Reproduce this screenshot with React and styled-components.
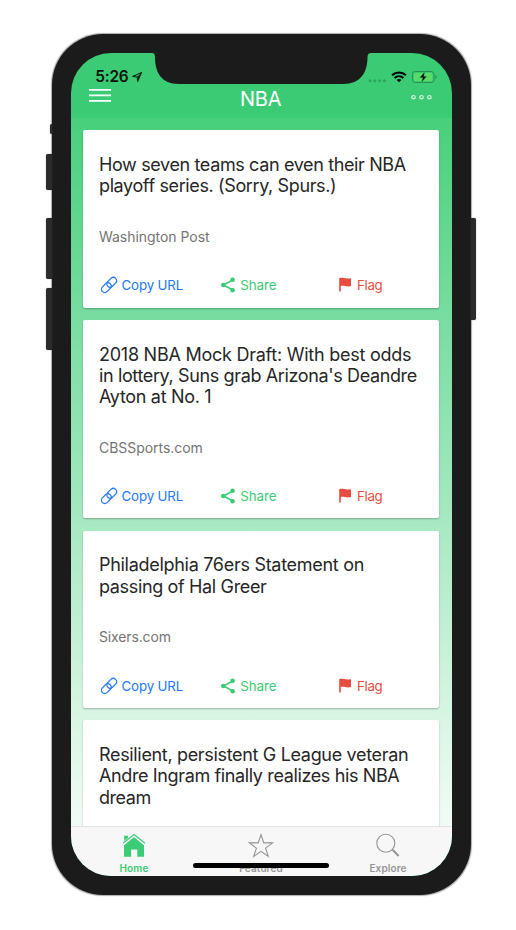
import React from 'react';
import styled, { createGlobalStyle } from 'styled-components';

const GREEN = '#3acb74';

const Global = createGlobalStyle`
  *, *::before, *::after { box-sizing: border-box; }
  body { margin: 0; background: #fff; font-family: Inter, 'Liberation Sans', sans-serif; }
  svg { display: block; flex: none; overflow: visible; }
`;

const Stage = styled.main`
  width: 516px;
  height: 930px;
  padding: 34px 0 0 51.5px;
  overflow: hidden;
`;

const Phone = styled.div`
  position: relative;
  width: 419px;
  height: 861px;
  padding: 19px;
  border-radius: 51px;
  background: #1b1b1b;
  box-shadow: 0 0 1px 0.5px #77777799;
`;

const SideButton = styled.i`
  position: absolute;
  top: ${(p) => p.$top}px;
  ${(p) => (p.$right ? 'right' : 'left')}: ${(p) => -p.$w}px;
  width: ${(p) => p.$w}px;
  height: ${(p) => p.$h}px;
  background: #2b2b2b;
  border-radius: ${(p) => (p.$right ? '0 2px 2px 0' : '2px 0 0 2px')};
  box-shadow: 0 0 1px #555;
`;

const Screen = styled.div`
  position: relative;
  display: flex;
  flex-direction: column;
  width: 381px;
  height: 823px;
  border-radius: 40px;
  overflow: hidden;
  background: ${GREEN};
`;

const Notch = styled.svg`
  position: absolute;
  left: 83.3px;
  top: -1px;
`;

const StatusBar = styled.div`
  display: flex;
  justify-content: space-between;
  height: 31px;
  flex: none;
  padding: 13px 15px 0 24.8px;
`;

const StatusGroup = styled.div`
  display: flex;
  align-items: center;
  height: 21px;
  gap: ${(p) => p.$gap}px;
`;

const Clock = styled.span`
  font-size: 15.4px;
  font-weight: 600;
  line-height: 21px;
  letter-spacing: -0.25px;
  color: #061309;
`;

const NavBar = styled.header`
  display: grid;
  grid-template-columns: 80px 1fr 80px;
  height: 34px;
  flex: none;
  padding: 0 19.4px 0 18.7px;
`;

const NavTitle = styled.h1`
  margin: 3px 0 0;
  text-align: center;
  font-size: 20px;
  font-weight: 400;
  line-height: 24px;
  letter-spacing: -0.2px;
  color: #fff;
`;

const MenuIcon = styled.svg`
  margin-top: 5px;
`;

const MoreIcon = styled.svg`
  justify-self: end;
  margin-top: 10px;
`;

const Feed = styled.section`
  display: flex;
  flex-direction: column;
  gap: 12.3px;
  flex: 1;
  min-height: 0;
  overflow: hidden;
  padding: 12.3px 12.2px 0;
  background: linear-gradient(#48d07c 0%, #7adda2 29%, #a9e9c3 58%, #d4f4e1 82%, #f2fbf6 100%);
`;

const Card = styled.article`
  flex: none;
  min-height: 177.3px;
  padding: 23.7px 16.3px 11.8px;
  background: #fff;
  border-radius: 2px;
  box-shadow: 0 1px 2px rgba(0, 0, 0, 0.28);
`;

const CardTitle = styled.h2`
  margin: 0;
  font-size: 18px;
  font-weight: 400;
  line-height: 21.33px;
  color: #262626;
  white-space: nowrap;
`;

const TitleLine = styled.span`
  display: block;
  letter-spacing: ${(p) => p.$ls}px;
`;

const Source = styled.p`
  margin: 30px 0 28.5px;
  font-size: 14px;
  line-height: 20px;
  letter-spacing: ${(p) => p.$ls}px;
  color: #747474;
`;

const Actions = styled.div`
  display: grid;
  grid-template-columns: 120.3px 117.7px 1fr;
  padding-left: 2px;
  height: 20.6px;
`;

const Action = styled.button`
  display: flex;
  align-items: center;
  gap: ${(p) => p.$gap}px;
  border: 0;
  padding: 0;
  height: 20px;
  background: none;
  font: 400 13.3px/20px Inter, 'Liberation Sans', sans-serif;
  letter-spacing: ${(p) => p.$ls}px;
  color: ${(p) => p.$color};
`;

const TabBar = styled.nav`
  position: relative;
  display: grid;
  grid-template-columns: repeat(3, 1fr);
  height: 50px;
  flex: none;
  background: #f7f7f7;
  border-top: 1px solid #dfe2e0;
`;

const Tab = styled.a`
  display: flex;
  flex-direction: column;
  align-items: center;
  padding-top: 6px;
  gap: 4px;
  font-size: 10px;
  font-weight: 600;
  line-height: 13px;
  letter-spacing: 0.1px;
  color: ${(p) => (p.$active ? GREEN : '#959595')};
`;

const HomeIndicator = styled.div`
  position: absolute;
  left: 122.5px;
  bottom: 8px;
  width: 136px;
  height: 5px;
  border-radius: 3px;
  background: #000;
`;

const LinkIcon = () => (
  <svg width="16" height="16" viewBox="0 0 16 16" fill="none" stroke="currentColor" strokeWidth="1.2">
    <g transform="rotate(-45 8 8)">
      <rect x="-1.3" y="4.7" width="11" height="6.6" rx="3.3" />
      <rect x="6.3" y="4.7" width="11" height="6.6" rx="3.3" />
    </g>
  </svg>
);

const ShareIcon = () => (
  <svg width="14" height="16" viewBox="0 0 14 16" fill="currentColor">
    <path d="M11.8 3 2.4 8l9.4 5" fill="none" stroke="currentColor" strokeWidth="1.5" />
    <circle cx="2.2" cy="8" r="2.2" />
    <circle cx="11.6" cy="2.7" r="2.3" />
    <circle cx="11.6" cy="13.2" r="2.3" />
  </svg>
);

const FlagIcon = () => (
  <svg width="12" height="16" viewBox="0 0 12 16" fill="currentColor">
    <path d="M.2 1.2C3.5-.1 5.4 2.200 12 1.200V9C7 10.300 4.800 7.800 1.800 9V14.600H.2z" />
  </svg>
);

const HomeIcon = () => (
  <svg width="24" height="25" viewBox="0 0 24 25">
    <path d="M2.200 10V2.800H6V7z" fill="currentColor" />
    <path d="M2 11.800 12 3.800l10 8V23.800h-6.700v-7.300H9.100v7.300H2z" fill="currentColor" />
    <path d="M1 10.900 12 2l11 8.900" fill="none" stroke="#f7f7f7" strokeWidth="3.200" />
    <path d="M1 10.200 12 1.600l11 8.600" fill="none" stroke="currentColor" strokeWidth="1.200" />
  </svg>
);

const StarIcon = () => (
  <svg width="26" height="25" viewBox="0 0 26 25" fill="none" stroke="currentColor" strokeWidth="1.1">
    <path d="m13 1.8 2.800 8.100h8.800l-7 5.200 2.700 8.200L13 18.400l-7.300 4.900 2.700-8.200-7-5.200h8.800z" />
  </svg>
);

const SearchIcon = () => (
  <svg width="24" height="25" viewBox="0 0 24 25" fill="none" stroke="currentColor">
    <circle cx="9.8" cy="10.200" r="9" strokeWidth="1.1" />
    <path d="m16.100 16.600 1 1" strokeWidth="1.1" />
    <path d="m16.800 17.100 5.800 5.900" strokeWidth="2.1" />
  </svg>
);

const LocationIcon = () => (
  <svg width="11" height="12" viewBox="0 0 11 12">
    <path d="M9.6 1.4.8 5.4l4.4.5.5 4.5z" fill="none" stroke="#0b2a17" strokeWidth="1.1" strokeLinejoin="round" />
    <path d="M9.6 1.4 5.2 5.9l.5 4.5z" fill="#0b2a17" />
  </svg>
);

const CellIcon = () => (
  <svg width="18" height="4" viewBox="0 0 18 4" fill="#2ea55f">
    {[2, 6.8, 11.6, 16.4].map((x) => (
      <circle key={x} cx={x} cy="5.8" r="1.500" />
    ))}
  </svg>
);

const WifiIcon = () => (
  <svg width="16" height="12" viewBox="0 0 16 12" fill="none" stroke="#000" strokeWidth="2.100">
    <path d="M1 4.300c4-3.800 10-3.800 14 0" />
    <path d="M3.600 7c2.600-2.400 6.200-2.400 8.800 0" />
    <path d="M8 11.300 5.600 9c1.400-1.200 3.400-1.200 4.800 0z" fill="#000" stroke="none" />
  </svg>
);

const BatteryIcon = () => (
  <svg width="25" height="12" viewBox="0 0 25 12">
    <rect x="0.500" y="0.500" width="21.500" height="11" rx="2.800" fill="none" stroke="#249150" />
    <rect x="2" y="2" width="18.500" height="8" rx="1.300" fill="#57db69" />
    <path d="M23.300 4.100c1.800.6 1.800 3.200 0 3.800z" fill="#249150" />
    <path d="M12.900.5 7.600 6.700h3l-1.200 4.800 5.400-6.300h-3z" fill="#000" stroke="#3acb74" strokeWidth=".5" />
  </svg>
);

const articles = [
  {
    lines: [['How seven teams can even their NBA', -0.37], ['playoff series. (Sorry, Spurs.)', -0.38]],
    source: ['Washington Post', -0.04],
  },
  {
    lines: [
      ['2018 NBA Mock Draft: With best odds', -0.25],
      ["in lottery, Suns grab Arizona's Deandre", -0.37],
      ['Ayton at No. 1', -0.32],
    ],
    source: ['CBSSports.com', -0.04],
  },
  {
    lines: [['Philadelphia 76ers Statement on', -0.29], ['passing of Hal Greer', -0.35]],
    source: ['Sixers.com', -0.14],
  },
  {
    lines: [
      ['Resilient, persistent G League veteran', -0.33],
      ['Andre Ingram finally realizes his NBA', -0.37],
      ['dream', -0.45],
    ],
    source: null,
  },
];

function ArticleCard({ lines, source }) {
  return (
    <Card>
      <CardTitle>
        {lines.map(([text, ls]) => (
          <TitleLine key={text} $ls={ls}>{text}</TitleLine>
        ))}
      </CardTitle>
      {source && (
        <>
          <Source $ls={source[1]}>{source[0]}</Source>
          <Actions>
            <Action $color="#2478f4" $gap={4.5} $ls={-0.14}><LinkIcon />Copy URL</Action>
            <Action $color={GREEN} $gap={5} $ls={-0.06}><ShareIcon />Share</Action>
            <Action $color="#e74c40" $gap={6} $ls={-0.3}><FlagIcon />Flag</Action>
          </Actions>
        </>
      )}
    </Card>
  );
}

export default function App() {
  return (
    <>
      <Global />
      <Stage>
        <Phone>
          <SideButton $top={90} $h={10} $w={2} />
          <SideButton $top={120} $h={36} $w={6} />
          <SideButton $top={184} $h={61} $w={6} />
          <SideButton $top={254} $h={62} $w={6} />
          <SideButton $top={184} $h={102} $w={5} $right />
          <Screen>
            <StatusBar>
              <StatusGroup $gap={4}>
                <Clock>5:26</Clock>
                <LocationIcon />
              </StatusGroup>
              <StatusGroup $gap={5}>
                <CellIcon />
                <WifiIcon />
                <BatteryIcon />
              </StatusGroup>
            </StatusBar>
            <NavBar>
              <MenuIcon width="22" height="14" viewBox="0 0 22 14" fill="#fff">
                <path d="M0 0h22v1.800H0zM0 5.500h22v1.800H0zM0 11h22v1.800H0z" />
              </MenuIcon>
              <NavTitle>NBA</NavTitle>
              <MoreIcon width="21" height="6" viewBox="0 0 21 6" fill="none" stroke="#d8f5e3" strokeWidth="1.200">
                <circle cx="2.500" cy="3.200" r="1.700" />
                <circle cx="10.500" cy="3.200" r="1.700" />
                <circle cx="18.400" cy="3.200" r="1.700" />
              </MoreIcon>
            </NavBar>
            <Feed>
              {articles.map((a) => (
                <ArticleCard key={a.lines[0][0]} {...a} />
              ))}
            </Feed>
            <TabBar>
              <Tab $active><HomeIcon />Home</Tab>
              <Tab><StarIcon />Featured</Tab>
              <Tab><SearchIcon />Explore</Tab>
              <HomeIndicator />
            </TabBar>
            <Notch width="214" height="32" viewBox="0 0 214 32" fill="#1b1b1b">
              <path d="M-4 0V1H-2Q1 1 1 5C1 20 7 32 25 32H189C207 32 213.500 20 213.500 5Q213.500 1 217 1V0Z" />
            </Notch>
          </Screen>
        </Phone>
      </Stage>
    </>
  );
}
